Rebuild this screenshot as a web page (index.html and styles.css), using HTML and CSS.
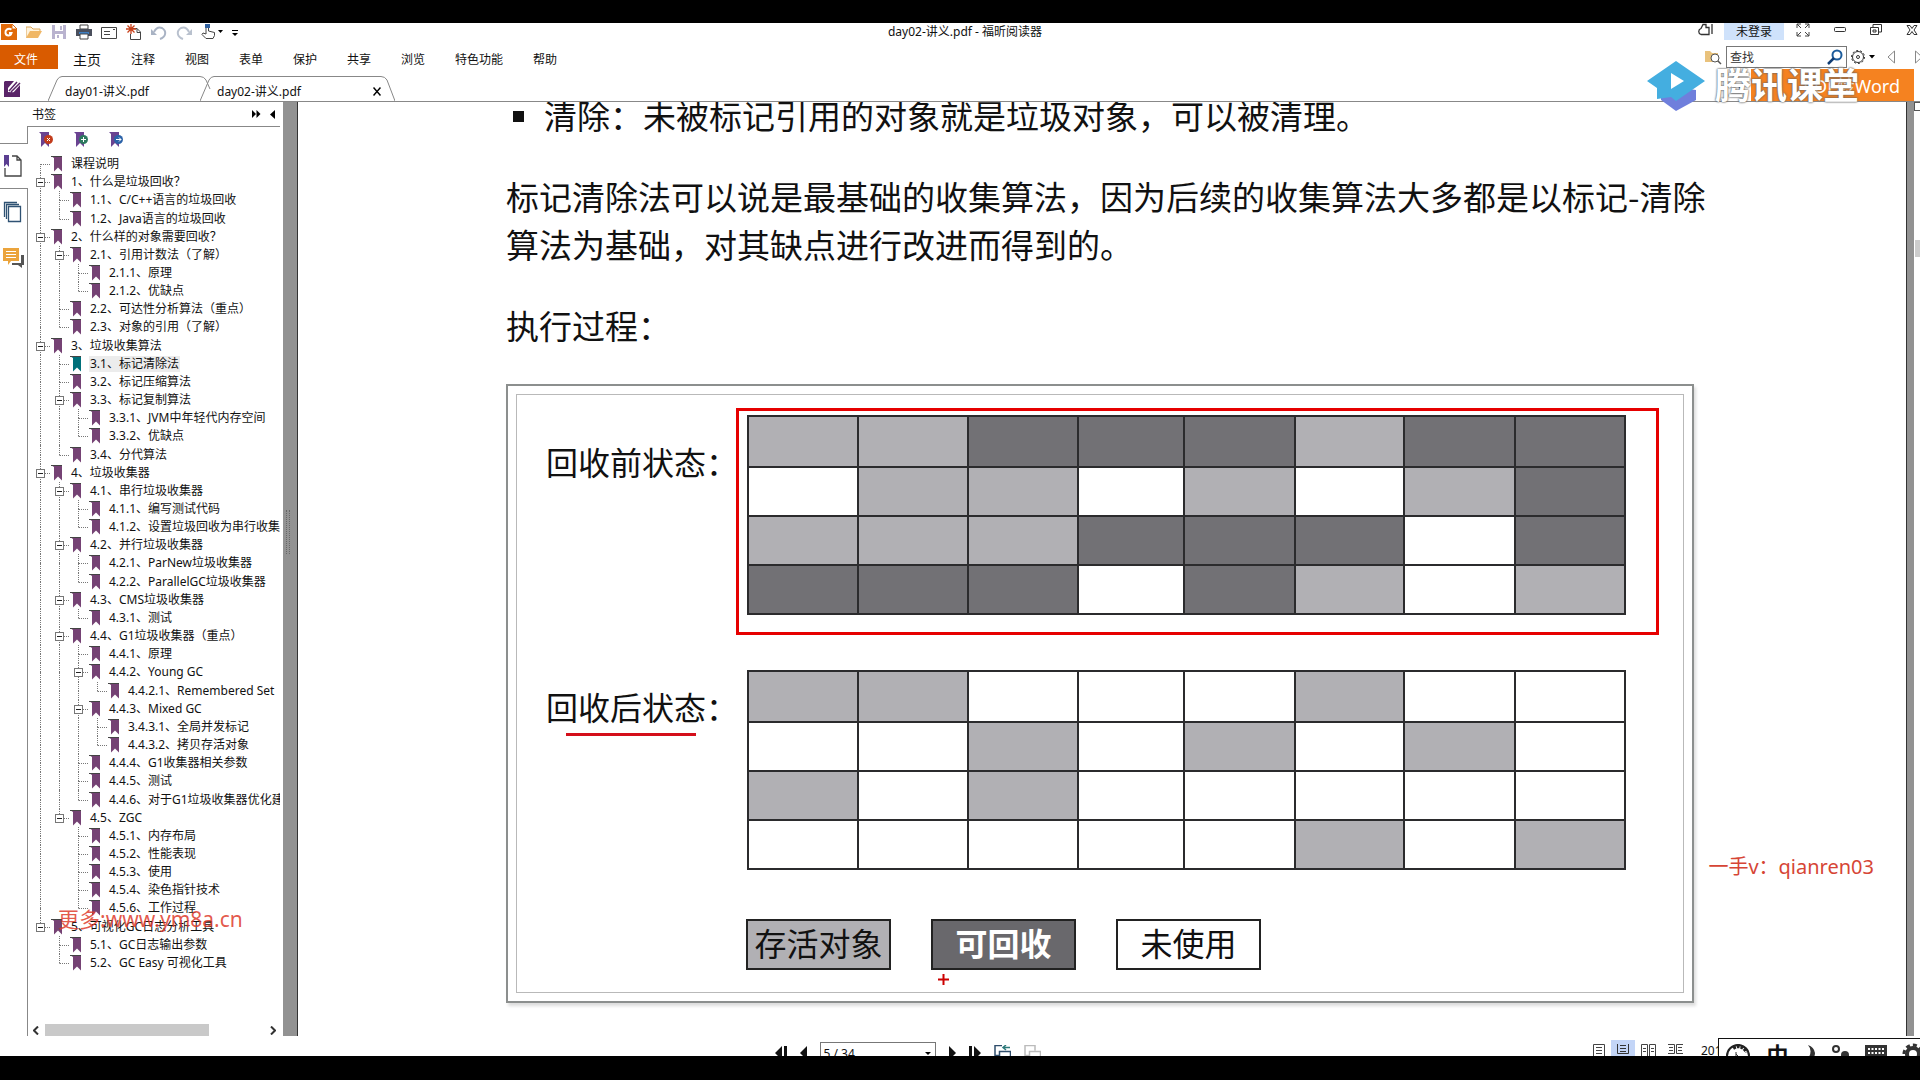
FILE: index.html
```html
<!DOCTYPE html>
<html lang="zh-CN">
<head>
    <meta charset="UTF-8">
    <meta name="viewport" content="width=device-width, initial-scale=1.0">
    <title>day02-讲义.pdf - 福昕阅读器</title>
    <link rel="stylesheet" href="styles.css">
</head>
<body>
    <svg class="defs" aria-hidden="true">
        <symbol id="mark" viewBox="0 0 12 16">
            <path d="M0 0h11v15.500l-4-4-4 4V2z" fill="currentColor"/>
            <path d="M0 0.500h11" stroke="#444" fill="none"/>
        </symbol>
        <symbol id="flag" viewBox="0 0 14 16">
            <path d="M0 0h10v15l-4-4-4 4V2z" fill="#6a4391"/>
        </symbol>
    </svg>

    <div class="app">
        <header class="titlebar">
            <div class="quick">
                <button aria-label="福昕"><svg width="16" height="16" viewBox="0 0 16 16"><path d="M0 0h11l5 5v11H0z" fill="#e06a0a"/><path d="M11 0v5h5z" fill="#fff" stroke="#e06a0a"/><path d="M10.500 5.500C7 3.500 4 6 4.500 9s5 3.500 6 0H8" fill="none" stroke="#fff" stroke-width="2"/></svg></button>
                <button aria-label="打开"><svg width="16" height="16" viewBox="0 0 16 16"><path d="M0 14V3h5l2 2h7v3" fill="#fff3dd" stroke="#dba659"/><path d="M0 14l4-7h12l-4 7z" fill="#f0b766"/></svg></button>
                <button aria-label="保存"><svg width="16" height="16" viewBox="0 0 16 16"><path d="M1 1h14v14H1z" fill="#b9b3cf"/><path d="M4 1h8v6H4zM4 10h8v5H4z" fill="#fff"/><path d="M6 11h2v3H6zM9 2h2v4H9z" fill="#b9b3cf"/></svg></button>
                <button aria-label="打印"><svg width="16" height="16" viewBox="0 0 16 16"><path d="M4 1h8v4H4z" fill="#fff" stroke="#444"/><path d="M0 5h16v7H0z" fill="#4a4f5c"/><path d="M3 8h10v2H3z" fill="#3f7fc1"/><path d="M4 10h8v5H4z" fill="#fff" stroke="#444"/></svg></button>
                <button aria-label="邮件"><svg width="16" height="16" viewBox="0 0 16 16"><path d="M.5 3.500h15v11H.5z" fill="#fff" stroke="#444"/><path d="M3 7.500h6M3 10.500h6M12 5.500h2" stroke="#444"/></svg></button>
                <button aria-label="新建"><svg width="16" height="16" viewBox="0 0 16 16"><path d="M5 4.500h6l3.500 3.500v7.500H4.500V10M11 4.500v4h3" fill="none" stroke="#444"/><path d="M5 0v10M0 5h10M1.500 1.500l7 7M8.500 1.500l-7 7" stroke="#c8401a" stroke-width="1.300"/></svg></button>
                <button aria-label="撤销"><svg width="16" height="16" viewBox="0 0 16 16"><path d="M3 8q3-6 8-4c5 3 4 9-2 11" fill="none" stroke="#a9b3c4" stroke-width="2"/><path d="M0 5v6h6z" fill="#a9b3c4"/></svg></button>
                <button aria-label="重做"><svg width="16" height="16" viewBox="0 0 16 16"><path d="M13 8q-3-6-8-4c-5 3-4 9 2 11" fill="none" stroke="#b9c1ce" stroke-width="2"/><path d="M16 5v6h-6z" fill="#b9c1ce"/></svg></button>
                <button aria-label="手型工具"><svg width="22" height="16" viewBox="0 0 22 16"><path d="M5 10V2h2.500v5l6 1.500v3l-1.500 3H5l-4-4 1-1.500z" fill="#fff" stroke="#444"/><path d="M4 0h5v4H4z" fill="#2f5f9e"/><path d="M17 6h5l-2.500 3z"/></svg></button>
                <button aria-label="自定义"><svg width="6" height="16" viewBox="0 0 6 16"><path d="M0 6.500h6" stroke="#000"/><path d="M0 9h6l-3 3z"/></svg></button>
            </div>
            <h1>day02-讲义.pdf - 福昕阅读器</h1>
            <div class="window-tools">
                <button aria-label="皮肤"><svg width="16" height="14" viewBox="0 0 16 14"><path d="M3 11.500c-3-1-3-5 0-6l2-4h3v3h3v7zM14 1v10" fill="none" stroke="#333" stroke-width="1.300"/></svg></button>
                <button class="login">未登录</button>
                <button aria-label="全屏"><svg width="14" height="14" viewBox="0 0 14 14"><path d="M1 5V1h4M1 1l4 4M9 1h4v4M13 1L9 5M1 9v4h4M1 13l4-4M13 9v4H9M13 13L9 9" fill="none" stroke="#444"/></svg></button>
                <button aria-label="最小化"><svg width="12" height="14" viewBox="0 0 12 14"><rect x=".5" y="4.500" width="11" height="4" rx="1" fill="none" stroke="#333"/></svg></button>
                <button aria-label="还原"><svg width="12" height="14" viewBox="0 0 12 14"><path d="M.5 4.500h8v7h-8zM3 4V1.500h8.500V9H9M3 7h3v2H3z" fill="none" stroke="#333"/></svg></button>
                <button aria-label="关闭"><svg width="12" height="14" viewBox="0 0 12 14"><path d="M1 2.500h3l2 3 2-3h3L8 7l3 4.500H8l-2-3-2 3H1L4 7z" fill="none" stroke="#333"/></svg></button>
            </div>
        </header>

        <nav class="ribbon">
            <button class="file">文件</button>
            <button class="home">主页</button>
            <button>注释</button>
            <button>视图</button>
            <button>表单</button>
            <button>保护</button>
            <button>共享</button>
            <button>浏览</button>
            <button>特色功能</button>
            <button>帮助</button>
            <div class="search">
                <svg width="17" height="16" viewBox="0 0 17 16"><path d="M0 2h5l2 2h6v9H0z" fill="#e9c27c"/><circle cx="10" cy="9" r="4" fill="#fff" stroke="#555"/><path d="M13 12l3 3" stroke="#555" stroke-width="1.500"/></svg>
                <label class="find">
                    <input type="text" placeholder="查找" aria-label="查找">
                    <svg width="16" height="16" viewBox="0 0 16 16"><circle cx="10" cy="6" r="4.500" fill="none" stroke="#1c5c9c" stroke-width="2"/><path d="M7 9l-6 6" stroke="#123e75" stroke-width="2.500"/></svg>
                </label>
                <svg width="24" height="16" viewBox="0 0 24 16"><circle cx="7" cy="8" r="5.500" fill="none" stroke="#333"/><circle cx="7" cy="8" r="6.500" fill="none" stroke="#333" stroke-dasharray="2 2"/><circle cx="7" cy="8" r="1.500" fill="none" stroke="#333"/><path d="M18 6h6l-3 3.500z"/></svg>
                <svg width="8" height="14" viewBox="0 0 8 14"><path d="M7.500 1v12L1 7z" fill="none" stroke="#888"/></svg>
                <svg class="next-hit" width="8" height="14" viewBox="0 0 8 14"><path d="M.5 1v12L7 7z" fill="none" stroke="#888"/></svg>
            </div>
        </nav>

        <div class="doctabs">
            <button class="start" aria-label="起始页"><svg width="17" height="16" viewBox="0 0 17 16"><path d="M1 0h9L4 7v4l5 1 7-8v12H0V1z" fill="#5a2468"/><path d="M5 10l8-9M7 11l9-9M3 12h8" stroke="#5a2468" stroke-width="1.500"/></svg></button>
            <div class="tab">
                <svg class="edge" viewBox="0 0 14 25"><path d="M0 25L9 4q2-3.500 5-3.500" /></svg>
                <a href="#day01">day01-讲义.pdf</a>
                <svg class="edge" viewBox="0 0 14 25"><path d="M0 .5q4 0 6 3.500l4 9"/></svg>
            </div>
            <div class="tab current">
                <svg class="edge" viewBox="0 0 14 25"><path d="M0 25L9 4q2-3.500 5-3.500" /></svg>
                <a href="#day02">day02-讲义.pdf</a>
                <button aria-label="关闭标签"><svg width="8" height="9" viewBox="0 0 8 9"><path d="M.5.500l7 8M7.500.500l-7 8" stroke="#000" stroke-width="1.500"/></svg></button>
                <svg class="edge" viewBox="0 0 14 25"><path d="M0 .5q4 0 6 3.500l8 21"/></svg>
            </div>
            <svg class="tab-menu" width="6" height="4" viewBox="0 0 6 4"><path d="M0 0h6L3 4z"/></svg>
            <a class="banner" href="#convert">PDF转Word</a>
        </div>

        <main>
            <aside class="rail">
                <div class="rail-top"></div>
                <button class="rail-on" aria-label="书签"><svg width="18" height="22" viewBox="0 0 18 22"><path d="M8 1h5l4 4v16H1v-8M13 1v4h4" fill="none" stroke="#444" stroke-width="1.300"/><path d="M0 0h5v12l-2.500-3L0 12z" fill="#5b3f91"/></svg></button>
                <div class="rail-rest">
                    <button aria-label="页面"><svg width="19" height="22" viewBox="0 0 19 22"><path d="M5.500 5.500h12v15h-12zM3.500 18V3.500H16M1.500 16V1.500H14" fill="none" stroke="#2f5273" stroke-width="1.300"/></svg></button>
                    <button aria-label="注释"><svg width="21" height="20" viewBox="0 0 21 20"><path d="M18 7h3v10h-2v3l-4-3H9v-2h9z" fill="#555"/><path d="M0 0h16v13H8l-3 4v-4H0z" fill="#eba43c"/><path d="M3 3.500h10M3 6.500h10M3 9.500h10" stroke="#fff"/></svg></button>
                </div>
            </aside>

            <section class="panel">
                <header>
                    <h2>书签</h2>
                    <button aria-label="展开"><svg width="9" height="8" viewBox="0 0 9 8"><path d="M0 0l4 4-4 4zM4.500 0l4 4-4 4z"/></svg></button>
                    <button aria-label="收起"><svg width="5" height="9" viewBox="0 0 5 9"><path d="M5 0v9L0 4.500z"/></svg></button>
                </header>
                <div class="panel-tools">
                    <button aria-label="删除"><svg width="14" height="16"><use href="#flag"/><circle cx="9.500" cy="7.500" r="4.500" fill="#c23c1c"/><path d="M8 6l3 3M11 6L8 9" stroke="#fff"/></svg></button>
                    <button aria-label="添加"><svg width="14" height="16"><use href="#flag"/><circle cx="9.500" cy="7.500" r="4.500" fill="#2d7a5f"/><path d="M7 7.500h5M9.500 5v5" stroke="#fff"/></svg></button>
                    <button aria-label="定位"><svg width="14" height="16"><use href="#flag"/><circle cx="9.500" cy="7.500" r="4.500" fill="#2b62a8"/><path d="M7 7.500h5M10 5.500l2 2-2 2" stroke="#fff" fill="none"/></svg></button>
                </div>
                <ul class="tree" id="tree"></ul>
                <div class="hscroll">
                    <svg width="6" height="9" viewBox="0 0 6 9"><path d="M5 .5l-4 4 4 4" fill="none" stroke="#333" stroke-width="2"/></svg>
                    <div class="track"><div class="thumb"></div></div>
                    <svg width="6" height="9" viewBox="0 0 6 9"><path d="M1 .5l4 4-4 4" fill="none" stroke="#333" stroke-width="2"/></svg>
                </div>
            </section>

            <div class="splitter"><span class="grip"></span></div>

            <article class="page">
                <ul class="points">
                    <li>清除：未被标记引用的对象就是垃圾对象，可以被清理。</li>
                </ul>
                <p>标记清除法可以说是最基础的收集算法，因为后续的收集算法大多都是以标记-清除<br>算法为基础，对其缺点进行改进而得到的。</p>
                <p>执行过程：</p>
                <figure>
                    <div class="sheet">
                        <div class="state before">
                            <span class="label">回收前状态：</span>
                            <div class="frame"><div class="heap" data-cells="LLDDDLDD WLLWLWLD LLLDDDWD DDDWDLWL"></div></div>
                        </div>
                        <div class="state after">
                            <span class="label">回收后状态：</span>
                            <div class="frame"><div class="heap" data-cells="LLWWWLWW WWLWLWLW LWLWWWWW WWWWWLWL"></div></div>
                        </div>
                        <div class="legend">
                            <span class="live">存活对象</span>
                            <span class="dead">可回收</span>
                            <span class="free">未使用</span>
                        </div>
                    </div>
                </figure>
            </article>

            <div class="page-edge"></div>
            <div class="vscroll"><span class="split-box"></span><span class="vthumb"></span></div>
        </main>

        <footer class="status">
            <div class="pager">
                <button aria-label="首页"><svg width="12" height="14" viewBox="0 0 12 14"><path d="M7 0v14L0 7zM9 0h3v14H9z" fill="#111"/></svg></button>
                <button aria-label="上一页"><svg width="7" height="14" viewBox="0 0 7 14"><path d="M7 0v14L0 7z" fill="#111"/></svg></button>
                <div class="page-no">
                    <select aria-label="页码"><option>5 / 34</option></select>
                    <svg width="6" height="3" viewBox="0 0 6 3"><path d="M0 0h6L3 3z"/></svg>
                </div>
                <button aria-label="下一页"><svg width="7" height="14" viewBox="0 0 7 14"><path d="M0 0v14l7-7z" fill="#111"/></svg></button>
                <button aria-label="末页"><svg width="12" height="14" viewBox="0 0 12 14"><path d="M5 0v14l7-7zM0 0h3v14H0z" fill="#111"/></svg></button>
                <button aria-label="上一视图"><svg width="17" height="16" viewBox="0 0 17 16"><path d="M5 10.500H1V.5h7M5.500 6.500h11v9h-11z" fill="none" stroke="#2f4d6b" stroke-width="1.500"/><path d="M16 2.500H9M12 0L9 2.500 12 5" fill="none" stroke="#2d7a7a" stroke-width="1.500"/></svg></button>
                <button aria-label="下一视图"><svg width="17" height="16" viewBox="0 0 17 16"><path d="M5 10.500H1V.5h10v5M5.500 6.500h11v9h-11z" fill="none" stroke="#bbb" stroke-width="1.500"/></svg></button>
            </div>
            <div class="views">
                <button aria-label="单页"><svg width="12" height="14" viewBox="0 0 12 14"><path d="M.5.500h11v13H.5zM3 3.500h6M3 6.500h6M3 9.500h6" fill="none" stroke="#444"/></svg></button>
                <button class="on" aria-label="连续"><svg width="12" height="14" viewBox="0 0 12 14"><path d="M.5 0v9.500h11V0M3 1.500h6M3 4.500h6M3 7.500h6M0 12.500h12" fill="none" stroke="#333"/></svg></button>
                <button aria-label="双页"><svg width="15" height="14" viewBox="0 0 15 14"><path d="M.5.500h6v13h-6zM8.500.500h6v13h-6zM2 4.500h3M2 7.500h3M10 4.500h3M10 7.500h3" fill="none" stroke="#444"/></svg></button>
                <button aria-label="双页连续"><svg width="15" height="14" viewBox="0 0 15 14"><path d="M0 .5h6.500v9H0M15 .5H8.500v9H15M1 3.500h4M1 6.500h4M10 3.500h4M10 6.500h4" fill="none" stroke="#444"/></svg></button>
                <span>201</span>
            </div>
            <div class="ime">
                <svg width="26" height="26" viewBox="0 0 26 26"><circle cx="13" cy="13" r="11" fill="none" stroke="#222" stroke-width="2"/><path d="M8 5q8-5 14 4" fill="none" stroke="#222" stroke-width="4" stroke-dasharray="3 1"/><path d="M11 9v5l-3 4M11 11l3 3" fill="none" stroke="#333"/></svg>
                <span>中</span>
                <svg width="12" height="20" viewBox="0 0 12 20"><path d="M4 2q6 7-2 16 9-1 9-8-1-6-7-8z" fill="#333"/></svg>
                <svg width="18" height="20" viewBox="0 0 18 20"><circle cx="5" cy="6" r="3" fill="none" stroke="#333" stroke-width="2"/><circle cx="14" cy="12" r="4" fill="#333"/></svg>
                <svg width="22" height="18" viewBox="0 0 22 18"><path d="M0 2h22v16H0z" fill="#333"/><path d="M3 6h16M3 10h16" stroke="#fff" stroke-width="2" stroke-dasharray="2 1.500"/></svg>
                <svg width="22" height="22" viewBox="0 0 22 22"><circle cx="11" cy="11" r="6" fill="none" stroke="#333" stroke-width="4"/><circle cx="11" cy="11" r="9" fill="none" stroke="#333" stroke-width="3" stroke-dasharray="4 3"/></svg>
            </div>
        </footer>
    </div>

    <!-- floating watermarks -->
    <div class="brand">
        <svg width="58" height="50" viewBox="0 0 58 50"><path d="M14 34l15-8 20 3v10L29 50 14 39z" fill="#6f7fdc"/><path d="M29 0l29 20-29 20-5-4-14 2V27L0 20z" fill="#44aee0"/><path d="M24 12v16l13-8z" fill="#fff"/></svg>
        <span>腾讯课堂</span>
    </div>
    <div class="contact">一手v：qianren03</div>
    <div class="site">更多:www.ym8a.cn</div>
    <svg class="cursor" width="11" height="11" viewBox="0 0 11 11"><path d="M5.500 0v11M0 5.500h11" stroke="#c00" stroke-width="2"/></svg>

    <script src="script.js"></script>
</body>
</html>
```

FILE: styles.css
```css
* {
    box-sizing: border-box;
}
body {
    margin: 0;
    height: 100vh;
    padding: 23px 0 24px;
    background-color: #000;
    color: #111;
    font-family: "Noto Sans", "Noto Sans CJK SC", sans-serif;
    font-size: 12px;
    overflow: hidden;
}
button {
    border: none;
    background: none;
    padding: 0;
    font: inherit;
    color: inherit;
    cursor: pointer;
}
svg {
    display: block;
    flex-shrink: 0;
}
a {
    color: inherit;
    text-decoration: none;
}
h1, h2, ul, p, figure {
    margin: 0;
    padding: 0;
    font-weight: normal;
    font-size: 12px;
}
.defs {
    position: absolute;
    width: 0;
    height: 0;
}
.app {
    height: 100%;
    display: flex;
    flex-direction: column;
    background-color: #fff;
    overflow: hidden;
}

/* title bar */
.titlebar {
    height: 22px;
    display: grid;
    grid-template-columns: 1fr auto 1fr;
    align-items: start;
}
.quick {
    display: flex;
    gap: 9px;
    padding: 1px 0 0 1px;
}
.titlebar h1 {
    line-height: 18px;
    padding-left: 10px;
}
.window-tools {
    display: flex;
    justify-content: flex-end;
    align-items: flex-start;
    gap: 24px;
    padding-right: 2px;
}
.window-tools .login {
    width: 60px;
    height: 17px;
    line-height: 15px;
    margin: 0 -12px -2px -14px;
    background-color: #cfe2fb;
}

/* ribbon */
.ribbon {
    height: 24px;
    display: flex;
    align-items: center;
    gap: 30px;
}
.ribbon button {
    padding-top: 3px;
}
.ribbon .file {
    width: 58px;
    height: 24px;
    margin-right: -15px;
    padding-right: 6px;
    background-color: #d95b00;
    color: #fff;
}
.ribbon .home {
    font-size: 14px;
}
.search {
    display: flex;
    align-items: center;
    gap: 12px;
    margin-left: auto;
}
.find {
    display: flex;
    align-items: center;
    width: 121px;
    height: 22px;
    margin: 0 -8px;
    padding: 0 3px;
    border: 1px solid #777;
}
.find input {
    flex: 1;
    min-width: 0;
    border: none;
    outline: none;
    padding: 0;
    background: none;
    font: inherit;
}
.find input::placeholder {
    color: #333;
}
.search .next-hit {
    margin: 0 -3px 0 8px;
}

/* document tabs */
.doctabs {
    height: 33px;
    display: flex;
    align-items: flex-end;
    border-bottom: 1px solid #888;
}
.start {
    padding: 0 27px 4px 4px;
}
.tab {
    display: flex;
    align-items: center;
    height: 25px;
    width: 166px;
    margin-right: -14px;
}
.tab a {
    flex: 1;
    height: 25px;
    line-height: 30px;
    padding-left: 3px;
    border-top: 1px solid #888;
}
.tab.current {
    width: 195px;
}
.tab.current button {
    height: 25px;
    padding-top: 5px;
    border-top: 1px solid #888;
}
.edge {
    width: 14px;
    height: 25px;
    fill: none;
    stroke: #888;
}
.tab-menu {
    margin: 0 8px 12px auto;
}
.banner {
    width: 163px;
    height: 32px;
    line-height: 34px;
    margin-right: 6px;
    padding-right: 14px;
    background-color: #f58220;
    color: #fff;
    font-size: 18px;
    text-align: right;
}

/* main area */
main {
    flex: 1;
    min-height: 0;
    display: flex;
}
.rail {
    width: 28px;
    display: flex;
    flex-direction: column;
}
.rail-top {
    height: 18px;
    margin-top: 24px;
    border: solid #888;
    border-width: 0 1px 1px 0;
}
.rail-on {
    height: 44px;
    padding-left: 4px;
}
.rail-rest {
    flex: 1;
    display: flex;
    flex-direction: column;
    gap: 25px;
    padding: 12px 0 0 3px;
    border: solid #888;
    border-width: 1px 1px 0 0;
}
.panel {
    width: 252px;
    display: flex;
    flex-direction: column;
    overflow: hidden;
}
.panel header {
    height: 25px;
    display: flex;
    align-items: center;
    gap: 9px;
    padding: 0 5px 0 4px;
    border-bottom: 1px solid #888;
}
.panel h2 {
    flex: 1;
}
.panel-tools {
    display: flex;
    gap: 21px;
    padding: 5px 11px 7px;
}
.tree {
    flex: 1;
    display: grid;
    grid-auto-rows: 1fr;
    padding-left: 3px;
    list-style: none;
}
.tree li {
    display: flex;
    align-items: center;
    min-height: 0;
    white-space: nowrap;
}
.tree .mark {
    width: 12px;
    height: 16px;
    margin: 0 7px 0 1px;
    color: #754274;
}
.tree a {
    line-height: 16px;
    padding: 0 1px;
}
.tree .active .mark {
    color: #00707a;
}
.tree .active a {
    background-color: #ececec;
}
.guide {
    position: relative;
    align-self: stretch;
    flex: 0 0 19px;
    display: grid;
    grid-template: 1fr 1fr / 9px 10px;
}
.guide i {
    grid-column: 2;
    border-left: 1px dotted #777;
}
.guide .dash {
    border-top: 1px dotted #777;
}
.guide .none {
    border-left-color: transparent;
}
.toggle {
    position: absolute;
    left: 5px;
    top: 5px;
    width: 9px;
    height: 9px;
    border: 1px solid #777;
    background: linear-gradient(#222, #222) center / 5px 1px no-repeat #fff;
}
.hscroll {
    height: 12px;
    display: flex;
    align-items: center;
    gap: 6px;
    margin-top: 52px;
    padding: 0 4px 0 5px;
}
.track {
    flex: 1;
}
.thumb {
    width: 75%;
    height: 12px;
    background-color: #c9c9c9;
}
.splitter {
    width: 15px;
    display: flex;
    align-items: center;
    margin-left: 3px;
    padding-left: 3px;
    background-color: #929292;
    border-right: 1px solid #333;
}
.grip {
    width: 4px;
    height: 44px;
    margin-bottom: 74px;
    border: dotted #666;
    border-width: 0 1px;
}

/* pdf page */
.page {
    flex: 1;
    min-width: 0;
    padding: 0 212px 0 208px;
    overflow: hidden;
}
.page li, .page p {
    font-family: "Noto Sans CJK SC", sans-serif;
    font-size: 33px;
    line-height: 48px;
    white-space: nowrap;
}
.page p {
    margin-top: 33px;
}
.points {
    margin-top: -11px;
    list-style: none;
}
.points li {
    display: flex;
    align-items: center;
    gap: 20px;
    padding-left: 7px;
}
.points li::before {
    content: "";
    width: 11px;
    height: 11px;
    margin-top: 3px;
    background-color: #111;
}
figure {
    margin-top: 35px;
    padding: 8px;
    border: 2px solid #8c8f8e;
    box-shadow: 2px 3px 3px #ddd;
}
.sheet {
    padding: 13px 24px 22px 29px;
    border: 1px solid #b9b9b9;
}
.state {
    display: grid;
    grid-template-columns: 190px 1fr;
    position: relative;
}
.label {
    font-size: 32px;
    line-height: 32px;
    padding-top: 39px;
    white-space: nowrap;
}
.frame {
    padding: 4px 30px 17px 8px;
    border: 3px solid transparent;
}
.before .frame {
    border-color: #e60000;
}
.after {
    margin-top: 28px;
}
.after .label {
    padding-top: 29px;
}
.after::after {
    content: "";
    position: absolute;
    left: 20px;
    top: 70px;
    width: 130px;
    height: 3px;
    background-color: #d40f1a;
}
.heap {
    display: grid;
    grid-template-columns: 110fr 110fr 110fr 106fr 111fr 109fr 111fr 110fr;
    grid-template-rows: 49px;
    grid-auto-rows: 47px;
    gap: 2px;
    padding: 2px;
    background-color: #2b2b2d;
}
.heap .L {
    background-color: #b1b0b4;
}
.heap .D {
    background-color: #727175;
}
.heap .W {
    background-color: #fff;
}
.legend {
    display: flex;
    gap: 40px;
    margin-top: 29px;
    padding-left: 200px;
}
.legend span {
    width: 145px;
    height: 51px;
    line-height: 46px;
    border: 2px solid #222;
    font-size: 32px;
    text-align: center;
}
.legend .live {
    background-color: #b1b0b4;
}
.legend .dead {
    background-color: #69686c;
    color: #fff;
    font-weight: bold;
}
.page-edge {
    width: 8px;
    background-color: #929292;
    border-left: 1px solid #333;
}
.vscroll {
    width: 6px;
    display: flex;
    flex-direction: column;
}
.split-box {
    height: 9px;
    border: 1px solid #555;
    border-right: none;
}
.vthumb {
    height: 17px;
    margin: 129px 0 0 1px;
    background-color: #ccc;
}

/* status bar */
.status {
    height: 20px;
    display: flex;
    align-items: flex-start;
    overflow: hidden;
}
.pager {
    flex: 1;
    display: flex;
    justify-content: center;
    align-items: center;
    gap: 13px;
    padding: 6px 0 0 222px;
}
.page-no {
    display: flex;
    align-items: center;
    width: 116px;
    height: 22px;
    padding-right: 4px;
    border: 1px solid #777;
}
.page-no select {
    flex: 1;
    padding: 0 3px;
    border: none;
    appearance: none;
    background: none;
    font: inherit;
    color: inherit;
}
.views {
    display: flex;
    gap: 12px;
    padding-top: 6px;
}
.views .on {
    width: 24px;
    height: 22px;
    margin: -2px -6px;
    padding: 2px 6px;
    background-color: #c3d5f7;
}
.views span {
    width: 17px;
    line-height: 18px;
    margin-left: 6px;
    overflow: hidden;
}
.ime {
    width: 206px;
    height: 36px;
    display: flex;
    justify-content: space-between;
    margin: 2px -4px 0 0;
    padding: 4px 0 0 6px;
    border: solid #111;
    border-width: 1px 0 0 1px;
}
.ime span {
    font-size: 22px;
    line-height: 22px;
    font-weight: bold;
}

/* watermarks */
.brand {
    position: absolute;
    top: 61px;
    right: 61px;
    display: flex;
    gap: 10px;
}
.brand span {
    font-size: 36px;
    line-height: 50px;
    font-weight: bold;
    color: #fff;
    text-shadow: 0 0 2px #555, 0 0 2px #777;
}
.contact {
    position: absolute;
    top: 853px;
    right: 46px;
    font-size: 20px;
    line-height: 28px;
    color: #d64535;
}
.site {
    position: absolute;
    left: 58px;
    top: 903px;
    font-size: 21px;
    line-height: 32px;
    color: rgba(222, 60, 45, 0.85);
}
.cursor {
    position: absolute;
    left: 938px;
    top: 974px;
}
```

FILE: script.js
```js
// level, title, flags: "+" has children, "*" selected
const bookmarks = [
    [1, '课程说明'],
    [1, '1、什么是垃圾回收？', '+'],
    [2, '1.1、C/C++语言的垃圾回收'],
    [2, '1.2、Java语言的垃圾回收'],
    [1, '2、什么样的对象需要回收？', '+'],
    [2, '2.1、引用计数法（了解）', '+'],
    [3, '2.1.1、原理'],
    [3, '2.1.2、优缺点'],
    [2, '2.2、可达性分析算法（重点）'],
    [2, '2.3、对象的引用（了解）'],
    [1, '3、垃圾收集算法', '+'],
    [2, '3.1、标记清除法', '*'],
    [2, '3.2、标记压缩算法'],
    [2, '3.3、标记复制算法', '+'],
    [3, '3.3.1、JVM中年轻代内存空间'],
    [3, '3.3.2、优缺点'],
    [2, '3.4、分代算法'],
    [1, '4、垃圾收集器', '+'],
    [2, '4.1、串行垃圾收集器', '+'],
    [3, '4.1.1、编写测试代码'],
    [3, '4.1.2、设置垃圾回收为串行收集器'],
    [2, '4.2、并行垃圾收集器', '+'],
    [3, '4.2.1、ParNew垃圾收集器'],
    [3, '4.2.2、ParallelGC垃圾收集器'],
    [2, '4.3、CMS垃圾收集器', '+'],
    [3, '4.3.1、测试'],
    [2, '4.4、G1垃圾收集器（重点）', '+'],
    [3, '4.4.1、原理'],
    [3, '4.4.2、Young GC', '+'],
    [4, '4.4.2.1、Remembered Set'],
    [3, '4.4.3、Mixed GC', '+'],
    [4, '3.4.3.1、全局并发标记'],
    [4, '4.4.3.2、拷贝存活对象'],
    [3, '4.4.4、G1收集器相关参数'],
    [3, '4.4.5、测试'],
    [3, '4.4.6、对于G1垃圾收集器优化建议'],
    [2, '4.5、ZGC', '+'],
    [3, '4.5.1、内存布局'],
    [3, '4.5.2、性能表现'],
    [3, '4.5.3、使用'],
    [3, '4.5.4、染色指针技术'],
    [3, '4.5.6、工作过程'],
    [1, '5、可视化GC日志分析工具', '+'],
    [2, '5.1、GC日志输出参数'],
    [2, '5.2、GC Easy 可视化工具']
];

// true when another item of this level follows before the branch closes
function continues(index, level) {
    for (let i = index + 1; i < bookmarks.length; i++) {
        if (bookmarks[i][0] < level) return false;
        if (bookmarks[i][0] === level) return true;
    }
    return false;
}

const tree = document.getElementById('tree');
bookmarks.forEach(([level, title, flag], index) => {
    let guides = '';
    for (let k = 1; k <= level; k++) {
        const below = continues(index, k) ? '' : 'none';
        const own = k === level;
        const above = own ? (index === 0 ? 'none' : '') : below;
        const toggle = own && flag === '+' ? '<button class="toggle" aria-label="折叠"></button>' : '';
        guides += `<span class="guide"><i class="${above}"></i><i class="${below} ${own ? 'dash' : ''}"></i>${toggle}</span>`;
    }
    const li = document.createElement('li');
    if (flag === '*') li.className = 'active';
    li.innerHTML = `${guides}<svg class="mark"><use href="#mark"/></svg><a href="#b${index}">${title}</a>`;
    tree.appendChild(li);
});

document.querySelectorAll('.heap').forEach((heap) => {
    heap.innerHTML = [...heap.dataset.cells.replace(/ /g, '')].map((c) => `<div class="${c}"></div>`).join('');
});
```
